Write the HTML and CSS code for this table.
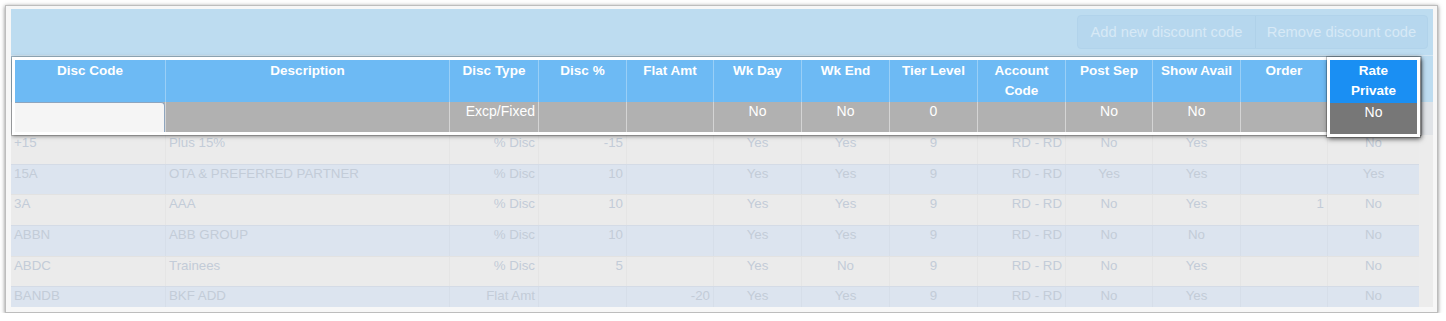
FILE: index.html
```html
<!DOCTYPE html>
<html lang="en">
<head>
<meta charset="utf-8">
<title>Discount codes</title>
<link rel="stylesheet" href="styles.css">
</head>
<body>
<div class="window">
  <div class="panel">
    <div class="toolbar">
      <div class="btn-group">
        <button class="btn add">Add new discount code</button>
        <button class="btn rem">Remove discount code</button>
      </div>
    </div>
    <div class="head-zone">
      <div class="overlay">
        <div class="col w151"><div class="h">Disc Code</div><div class="f f-input"><div class="input"></div></div></div>
        <div class="col w284"><div class="h">Description</div><div class="f"></div></div>
        <div class="col w89"><div class="h">Disc Type</div><div class="f r">Excp/Fixed</div></div>
        <div class="col w88"><div class="h">Disc %</div><div class="f"></div></div>
        <div class="col w87"><div class="h">Flat Amt</div><div class="f"></div></div>
        <div class="col w88"><div class="h">Wk Day</div><div class="f">No</div></div>
        <div class="col w88"><div class="h">Wk End</div><div class="f">No</div></div>
        <div class="col w88"><div class="h">Tier Level</div><div class="f">0</div></div>
        <div class="col w88"><div class="h">Account<br>Code</div><div class="f"></div></div>
        <div class="col w87"><div class="h">Post Sep</div><div class="f">No</div></div>
        <div class="col w88"><div class="h">Show Avail</div><div class="f">No</div></div>
        <div class="col w87"><div class="h">Order</div><div class="f"></div></div>
        <div class="col rp"><div class="h">Rate<br>Private</div><div class="f">No</div></div>
      </div>
    </div>
    <div class="rows">
      <div class="row odd"><div class="l">+15</div><div class="l">Plus 15%</div><div class="r">% Disc</div><div class="r">-15</div><div class="r"></div><div class="c">Yes</div><div class="c">Yes</div><div class="c">9</div><div class="r">RD - RD</div><div class="c">No</div><div class="c">Yes</div><div class="r"></div><div class="c">No</div></div>
      <div class="row even"><div class="l">15A</div><div class="l">OTA &amp; PREFERRED PARTNER</div><div class="r">% Disc</div><div class="r">10</div><div class="r"></div><div class="c">Yes</div><div class="c">Yes</div><div class="c">9</div><div class="r">RD - RD</div><div class="c">Yes</div><div class="c">Yes</div><div class="r"></div><div class="c">Yes</div></div>
      <div class="row odd"><div class="l">3A</div><div class="l">AAA</div><div class="r">% Disc</div><div class="r">10</div><div class="r"></div><div class="c">Yes</div><div class="c">Yes</div><div class="c">9</div><div class="r">RD - RD</div><div class="c">No</div><div class="c">Yes</div><div class="r">1</div><div class="c">No</div></div>
      <div class="row even"><div class="l">ABBN</div><div class="l">ABB GROUP</div><div class="r">% Disc</div><div class="r">10</div><div class="r"></div><div class="c">Yes</div><div class="c">Yes</div><div class="c">9</div><div class="r">RD - RD</div><div class="c">No</div><div class="c">No</div><div class="r"></div><div class="c">No</div></div>
      <div class="row odd"><div class="l">ABDC</div><div class="l">Trainees</div><div class="r">% Disc</div><div class="r">5</div><div class="r"></div><div class="c">Yes</div><div class="c">No</div><div class="c">9</div><div class="r">RD - RD</div><div class="c">No</div><div class="c">Yes</div><div class="r"></div><div class="c">No</div></div>
      <div class="row even"><div class="l">BANDB</div><div class="l">BKF ADD</div><div class="r">Flat Amt</div><div class="r"></div><div class="r">-20</div><div class="c">Yes</div><div class="c">Yes</div><div class="c">9</div><div class="r">RD - RD</div><div class="c">No</div><div class="c">Yes</div><div class="r"></div><div class="c">No</div></div>
    </div>
  </div>
</div>
</body>
</html>
```

FILE: styles.css
```css
* { box-sizing: border-box; }

body {
  margin: 0;
  background: #ffffff;
  font-family: "Liberation Sans", Arial, Helvetica, sans-serif;
}

.window {
  margin: 5px 0 0 5px;
  width: 1433px;
  border: 1px solid #bdbdbd;
  padding: 3px 4px 5px 5px;
  background: #f7f7f7;
  box-shadow: 0 1px 4px rgba(0, 0, 0, 0.5);
}

.panel {
  height: 298px;
  overflow: hidden;
  background: #ececec;
}

/* toolbar */
.toolbar {
  height: 47px;
  background: #bddcf0;
  border-bottom: 1px solid #d3e6f3;
  display: flex;
  justify-content: flex-end;
  align-items: flex-start;
  padding: 6px 5px 0 0;
}

.btn-group {
  display: flex;
  height: 34px;
  background: #b6d7ee;
  border: 1px solid #b1d3eb;
  border-radius: 4px;
}

.btn {
  height: 100%;
  border: 0;
  background: transparent;
  color: #d7e9f6;
  font-family: "Liberation Sans", Arial, sans-serif;
  font-size: 14.7px;
  padding: 0;
  text-align: center;
}

.btn.add { width: 177px; }
.btn.rem { width: 172px; border-left: 1px solid #afd1e9; }

/* highlighted header overlay */
.head-zone {
  padding: 1px 0 0 1px;
  background: linear-gradient(#bddcf0 46px, #e0e3e7 46px);
}

.overlay {
  position: relative;
  z-index: 1;
  display: flex;
  width: 1409px;
  border: 3px solid #ffffff;
  margin-bottom: -2px;
  box-shadow: 0 0 0 1px rgba(0, 0, 0, 0.16), 0 1px 4px rgba(0, 0, 0, 0.5);
}

.col {
  flex: none;
  display: flex;
  flex-direction: column;
}

.w151 { width: 151px; }
.w284 { width: 284px; }
.w89 { width: 89px; }
.w88 { width: 88px; }
.w87 { width: 87px; }

.h {
  height: 42px;
  padding-top: 1px;
  background: #6dbaf4;
  color: #ffffff;
  font-weight: bold;
  font-size: 13.5px;
  line-height: 20px;
  text-align: center;
  border-right: 1px solid rgba(255, 255, 255, 0.3);
}

.f {
  height: 30px;
  padding: 1px 3px 0;
  background: #b1b1b1;
  color: #ffffff;
  font-size: 14px;
  line-height: 17px;
  text-align: center;
  border-right: 1px solid rgba(255, 255, 255, 0.45);
}

.f.r { text-align: right; }

.f-input {
  padding: 0;
  background: #b1b1b1;
}

.input {
  height: 100%;
  background: #f5f5f5;
  border-top: 1px solid #8ea5be;
  border-right: 1px solid #8ea5be;
  border-top-right-radius: 4px;
}

.rp {
  position: relative;
  z-index: 2;
  width: 93px;
  height: 80px;
  margin: -3px -5px -5px -1px;
  border: 3px solid #ffffff;
  box-shadow: 0 0 0 1px rgba(0, 0, 0, 0.2), 1px 2px 5px rgba(0, 0, 0, 0.6);
}

.rp .h {
  height: 43px;
  background: #1a8ff3;
  border-right: 0;
}

.rp .f {
  height: 31px;
  background: #777777;
  border-right: 0;
}

/* faded data rows */
.row {
  display: grid;
  grid-template-columns: 155px 284px 89px 88px 87px 88px 88px 88px 88px 87px 88px 87px 91px;
  width: 1408px;
  height: 30.7px;
  font-size: 13.3px;
  line-height: 16px;
  color: #c3ccd8;
  border-top: 1px solid rgba(0, 0, 0, 0.035);
}

.row.odd { background: #ebebeb; }
.row.even { background: #dce4ef; }

.row > div {
  padding: 1px 3px 0;
  border-right: 1px solid rgba(0, 0, 0, 0.025);
  white-space: nowrap;
  overflow: hidden;
}

.row > div:last-child { border-right: 0; }

.l { text-align: left; }
.r { text-align: right; }
.c { text-align: center; }
```
